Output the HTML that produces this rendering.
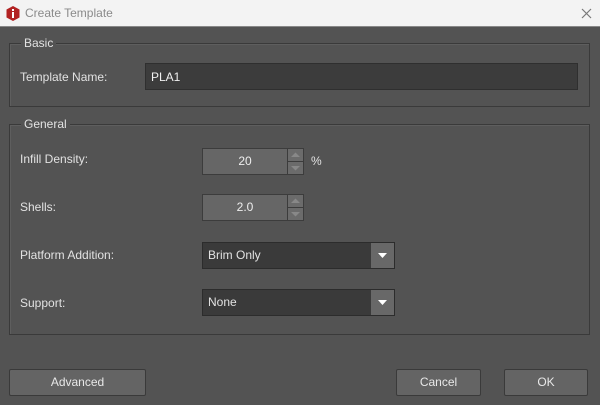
<!DOCTYPE html>
<html><head><meta charset="utf-8"><style>
*{margin:0;padding:0;box-sizing:border-box}
body{width:600px;height:405px;overflow:hidden;background:#535353;font-family:"Liberation Sans",sans-serif;font-size:12px;color:#e2e2e2;position:relative}
.abs{position:absolute}
.title{left:0;top:0;width:600px;height:27px;background:#f3f3f3;border-bottom:1px solid #888}
.title span{position:absolute;left:25px;top:6px;color:#8a8a8a;font-size:12px}
.grp{border:1px solid #3a3a3a;box-shadow:inset 1px 1px 0 #5e5e5e}
.leg{background:#535353;padding:0 3px;font-size:12px}
.inp{background:#3c3c3c;border:1px solid #2f2f2f}
.spin{background:#666;border:1px solid #3c3c3c;text-align:center;line-height:24px;color:#eee}
.sb{background:#6b6b6b;border:1px solid #3c3c3c}
.btn{background:#646464;border:1px solid #3a3a3a;border-radius:2px;text-align:center;line-height:25px;color:#e8e8e8}
.dd{background:#3a3a3a;border:1px solid #2c2c2c;line-height:24px;padding-left:5px}
.ddb{background:#686868}
</style></head><body>
<div class="abs title">
<svg class="abs" style="left:6px;top:6px" width="14" height="15" viewBox="0 0 14 15"><polygon points="7,0 13.5,3.5 13.5,11.5 7,15 0.5,11.5 0.5,3.5" fill="#b22222"/><rect x="6" y="3" width="2" height="2" fill="#fff"/><rect x="6" y="6" width="2" height="6" fill="#fff"/></svg>
<span>Create Template</span>
<svg class="abs" style="left:581px;top:8px" width="11" height="11"><path d="M1 1L10 10M10 1L1 10" stroke="#777" stroke-width="1.2"/></svg>
</div>
<div class="abs grp" style="left:9px;top:43px;width:581px;height:64px"></div>
<div class="abs leg" style="left:21px;top:36px">Basic</div>
<div class="abs" style="left:20px;top:70px">Template Name:</div>
<div class="abs inp" style="left:145px;top:63px;width:433px;height:27px"></div>
<div class="abs" style="left:151px;top:70px;color:#f0f0f0">PLA1</div>

<div class="abs grp" style="left:9px;top:124px;width:581px;height:211px"></div>
<div class="abs leg" style="left:21px;top:117px">General</div>
<div class="abs" style="left:20px;top:152px">Infill Density:</div>
<div class="abs" style="left:20px;top:200px">Shells:</div>
<div class="abs" style="left:20px;top:248px">Platform Addition:</div>
<div class="abs" style="left:20px;top:296px">Support:</div>

<div class="abs spin" style="left:202px;top:148px;width:86px;height:27px">20</div>
<div class="abs sb" style="left:287px;top:148px;width:17px;height:14px"></div>
<div class="abs sb" style="left:287px;top:161px;width:17px;height:14px"></div>
<svg class="abs" style="left:287px;top:148px" width="17" height="27"><path d="M4 9L8.5 4.5L13 9Z" fill="#888"/><path d="M4 18L8.5 22.5L13 18Z" fill="#888"/></svg>
<div class="abs" style="left:311px;top:154px">%</div>

<div class="abs spin" style="left:202px;top:194px;width:86px;height:27px">2.0</div>
<div class="abs sb" style="left:287px;top:194px;width:17px;height:14px"></div>
<div class="abs sb" style="left:287px;top:207px;width:17px;height:14px"></div>
<svg class="abs" style="left:287px;top:194px" width="17" height="27"><path d="M4 9L8.5 4.5L13 9Z" fill="#888"/><path d="M4 18L8.5 22.5L13 18Z" fill="#888"/></svg>

<div class="abs dd" style="left:202px;top:242px;width:193px;height:27px">Brim Only</div>
<div class="abs ddb" style="left:371px;top:243px;width:23px;height:25px"></div>
<svg class="abs" style="left:371px;top:243px" width="23" height="25"><path d="M7 10L16 10L11.5 15Z" fill="#fff"/></svg>

<div class="abs dd" style="left:202px;top:289px;width:193px;height:27px">None</div>
<div class="abs ddb" style="left:371px;top:290px;width:23px;height:25px"></div>
<svg class="abs" style="left:371px;top:290px" width="23" height="25"><path d="M7 10L16 10L11.5 15Z" fill="#fff"/></svg>

<div class="abs btn" style="left:9px;top:369px;width:137px;height:27px">Advanced</div>
<div class="abs btn" style="left:396px;top:369px;width:85px;height:27px">Cancel</div>
<div class="abs btn" style="left:504px;top:369px;width:84px;height:27px">OK</div>
</body></html>
